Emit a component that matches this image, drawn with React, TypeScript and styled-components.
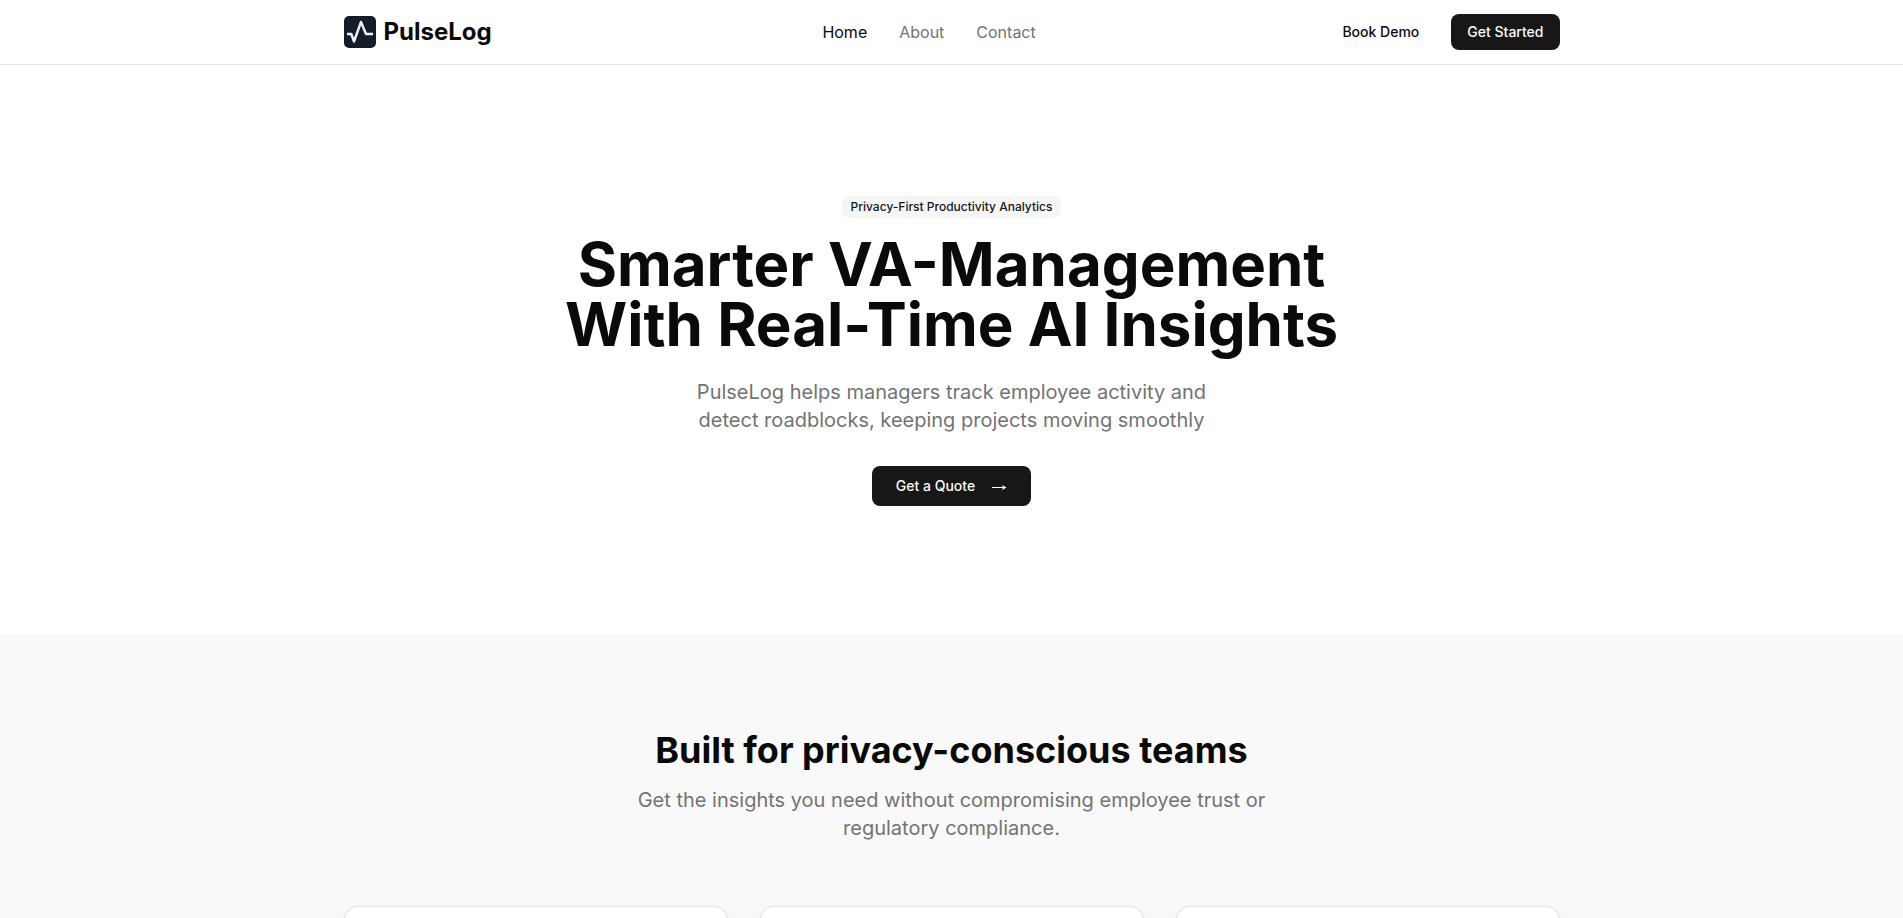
import React from "react";
import styled, { createGlobalStyle } from "styled-components";

const GlobalStyle = createGlobalStyle`
  *, *::before, *::after { box-sizing: border-box; }
  body {
    margin: 0;
    background: #ffffff;
    color: #0a0a0a;
    font-family: Inter, "Liberation Sans", sans-serif;
    font-size: 16px;
    line-height: 24px;
  }
  h1, h2, p { margin: 0; }
  a { color: inherit; text-decoration: none; }
  button { font-family: inherit; cursor: pointer; }
`;

const Header = styled.header`
  border-bottom: 1px solid #e5e5e5;
  background: #ffffff;
`;

const Container = styled.div`
  max-width: 1280px;
  margin: 0 auto;
  padding: 0 32px;
`;

const HeaderBar = styled(Container)`
  display: flex;
  align-items: center;
  justify-content: space-between;
  height: 64px;
`;

const Brand = styled.a`
  display: flex;
  align-items: center;
  gap: 8px;
  padding-right: 24px;
  font-size: 24px;
  line-height: 32px;
  font-weight: 700;
`;

const Nav = styled.nav`
  display: flex;
  align-items: center;
  gap: 32px;
`;

const NavLink = styled.a<{ $active?: boolean }>`
  color: ${({ $active }) => ($active ? "#0a0a0a" : "#737373")};
`;

const Actions = styled.div`
  display: flex;
  align-items: center;
  gap: 32px;
`;

const TextLink = styled.a`
  font-size: 14px;
  line-height: 20px;
  font-weight: 500;
`;

const Button = styled.button<{ $large?: boolean }>`
  display: inline-flex;
  align-items: center;
  justify-content: center;
  gap: 16px;
  height: ${({ $large }) => ($large ? "40px" : "36px")};
  padding: 0 ${({ $large }) => ($large ? "24px" : "16px")};
  border: 0;
  border-radius: 8px;
  background: #171717;
  color: #fafafa;
  font-size: 14px;
  line-height: 20px;
  font-weight: 500;
`;

const Hero = styled.section`
  padding: 128px 32px;
  text-align: center;
`;

const Badge = styled.span`
  display: inline-flex;
  padding: 2px 8px;
  border: 1px solid transparent;
  border-radius: 8px;
  background: #f5f5f5;
  color: #171717;
  font-size: 12px;
  line-height: 16px;
  font-weight: 500;
`;

const Title = styled.h1`
  max-width: 896px;
  margin: 16px auto 24px;
  font-size: 60px;
  line-height: 60px;
  font-weight: 700;
`;

const Lead = styled.p<{ $width: number }>`
  max-width: ${({ $width }) => $width}px;
  margin: 0 auto;
  color: #737373;
  font-size: 20px;
  line-height: 28px;
`;

const HeroActions = styled.div`
  display: flex;
  justify-content: center;
  margin-top: 32px;
`;

const Features = styled.section`
  padding: 96px 0;
  background: #f9f9f9;
`;

const SectionTitle = styled.h2`
  margin-bottom: 16px;
  font-size: 36px;
  line-height: 40px;
  font-weight: 700;
  text-align: center;
`;

const SectionLead = styled(Lead)`
  text-align: center;
`;

const CardGrid = styled.div`
  display: grid;
  grid-template-columns: repeat(3, 1fr);
  gap: 32px;
  margin-top: 64px;
`;

const Card = styled.article`
  min-height: 240px;
  border: 1px solid #e5e5e5;
  border-radius: 14px;
  background: #ffffff;
  box-shadow: 0 1px 3px rgba(0, 0, 0, 0.1), 0 1px 2px -1px rgba(0, 0, 0, 0.1);
`;

const PulseMark = () => (
  <svg width="32" height="32" viewBox="0 0 32 32" fill="none" aria-hidden="true">
    <rect width="32" height="32" rx="5" fill="#141e2b" />
    <path
      d="M3 18h4.300L10 25.500 17 6l5 12h7"
      stroke="#f1f1f0"
      strokeWidth="2.4"
      strokeLinejoin="round"
    />
  </svg>
);

const ArrowRight = () => (
  <svg width="16" height="16" viewBox="0 0 16 16" fill="none" aria-hidden="true">
    <path d="M1 9.500h13" stroke="#ffffff" />
    <path d="M11 7l4.500 2.500L11 12l1.200-2.500z" fill="#ffffff" />
  </svg>
);

export default function App() {
  return (
    <>
      <GlobalStyle />
      <Header>
        <HeaderBar>
          <Brand href="#">
            <PulseMark />
            PulseLog
          </Brand>
          <Nav aria-label="Main">
            <NavLink href="#" $active aria-current="page">Home</NavLink>
            <NavLink href="#about">About</NavLink>
            <NavLink href="#contact">Contact</NavLink>
          </Nav>
          <Actions>
            <TextLink href="#demo">Book Demo</TextLink>
            <Button type="button">Get Started</Button>
          </Actions>
        </HeaderBar>
      </Header>
      <main>
        <Hero>
          <Badge>Privacy-First Productivity Analytics</Badge>
          <Title>
            Smarter VA-Management
            <br />
            With Real-Time AI Insights
          </Title>
          <Lead $width={560}>
            PulseLog helps managers track employee activity and detect roadblocks, keeping projects moving smoothly
          </Lead>
          <HeroActions>
            <Button type="button" $large>
              Get a Quote
              <ArrowRight />
            </Button>
          </HeroActions>
        </Hero>
        <Features>
          <Container>
            <SectionTitle>Built for privacy-conscious teams</SectionTitle>
            <SectionLead $width={672}>
              Get the insights you need without compromising employee trust or regulatory compliance.
            </SectionLead>
            <CardGrid>
              <Card />
              <Card />
              <Card />
            </CardGrid>
          </Container>
        </Features>
      </main>
    </>
  );
}
